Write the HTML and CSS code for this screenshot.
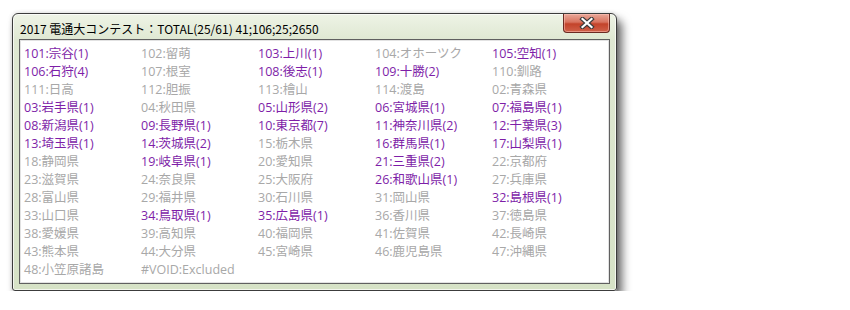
FILE: index.html
```html
<!DOCTYPE html>
<html lang="ja">
<head>
  <meta charset="UTF-8" />
  <title>2017 電通大コンテスト</title>
  <link rel="stylesheet" href="styles.css">
</head>
<body>

  <div class="window">
    <div class="titlebar">
      <span class="title">2017 電通大コンテスト：TOTAL(25/61) 41;106;25;2650</span>
      <div class="close-btn">
        <svg width="16" height="12" viewBox="0 0 16 12">
          <path d="M3.5 2 L12.5 10 M12.5 2 L3.5 10" stroke="#3b3b3b" stroke-width="4.4" stroke-linecap="square"/>
          <path d="M3.5 2 L12.5 10 M12.5 2 L3.5 10" stroke="#ffffff" stroke-width="2.2" stroke-linecap="square"/>
        </svg>
      </div>
    </div>

    <div class="panel">
      <div class="grid">
        <span class="on">101:宗谷(1)</span>
        <span>102:留萌</span>
        <span class="on">103:上川(1)</span>
        <span>104:オホーツク</span>
        <span class="on">105:空知(1)</span>

        <span class="on">106:石狩(4)</span>
        <span>107:根室</span>
        <span class="on">108:後志(1)</span>
        <span class="on">109:十勝(2)</span>
        <span>110:釧路</span>

        <span>111:日高</span>
        <span>112:胆振</span>
        <span>113:檜山</span>
        <span>114:渡島</span>
        <span>02:青森県</span>

        <span class="on">03:岩手県(1)</span>
        <span>04:秋田県</span>
        <span class="on">05:山形県(2)</span>
        <span class="on">06:宮城県(1)</span>
        <span class="on">07:福島県(1)</span>

        <span class="on">08:新潟県(1)</span>
        <span class="on">09:長野県(1)</span>
        <span class="on">10:東京都(7)</span>
        <span class="on">11:神奈川県(2)</span>
        <span class="on">12:千葉県(3)</span>

        <span class="on">13:埼玉県(1)</span>
        <span class="on">14:茨城県(2)</span>
        <span>15:栃木県</span>
        <span class="on">16:群馬県(1)</span>
        <span class="on">17:山梨県(1)</span>

        <span>18:静岡県</span>
        <span class="on">19:岐阜県(1)</span>
        <span>20:愛知県</span>
        <span class="on">21:三重県(2)</span>
        <span>22:京都府</span>

        <span>23:滋賀県</span>
        <span>24:奈良県</span>
        <span>25:大阪府</span>
        <span class="on">26:和歌山県(1)</span>
        <span>27:兵庫県</span>

        <span>28:富山県</span>
        <span>29:福井県</span>
        <span>30:石川県</span>
        <span>31:岡山県</span>
        <span class="on">32:島根県(1)</span>

        <span>33:山口県</span>
        <span class="on">34:鳥取県(1)</span>
        <span class="on">35:広島県(1)</span>
        <span>36:香川県</span>
        <span>37:徳島県</span>

        <span>38:愛媛県</span>
        <span>39:高知県</span>
        <span>40:福岡県</span>
        <span>41:佐賀県</span>
        <span>42:長崎県</span>

        <span>43:熊本県</span>
        <span>44:大分県</span>
        <span>45:宮崎県</span>
        <span>46:鹿児島県</span>
        <span>47:沖縄県</span>

        <span>48:小笠原諸島</span>
        <span>#VOID:Excluded</span>
      </div>
    </div>
  </div>

</body>
</html>
```

FILE: styles.css
```css
body {
  margin: 0;
  padding: 13px 0 0 12px;
  background: #fff;
  font-family: "Open Sans", "Noto Sans CJK JP", sans-serif;
}

.window {
  width: 605px;
  height: 278px;
  border: 1px solid #3c3c3c;
  border-radius: 6px 6px 3px 3px;
  background: linear-gradient(to bottom, #eef3e6 0px, #dfe8d2 26px, #d6e2c6 100%);
  box-shadow: 5px 7px 10px rgba(0, 0, 0, 0.6), 0 0 4px rgba(0, 0, 0, 0.15), inset 0 0 0 1px rgba(255, 255, 255, 0.7);
  display: flex;
  flex-direction: column;
  padding: 0 6px 6px 6px;
  box-sizing: border-box;
}

.titlebar {
  height: 25px;
  display: flex;
  align-items: center;
  justify-content: space-between;
}

.title {
  font-size: 12px;
  color: #000;
  padding-left: 1px;
  padding-top: 3px;
  font-family: "Noto Sans CJK JP", sans-serif;
}

.close-btn {
  width: 45px;
  height: 18px;
  margin-top: -6px;
  border: 1px solid #6b2a22;
  border-top: none;
  border-radius: 0 0 4px 4px;
  background: linear-gradient(to bottom, #e9a899 0%, #d8735f 45%, #c3432a 55%, #d0614a 100%);
  box-shadow: inset 0 0 0 1px rgba(255, 200, 190, 0.5);
  display: flex;
  align-items: center;
  justify-content: center;
}

.panel {
  flex: 1;
  background: #fff;
  border: 1px solid #606060;
  box-shadow: inset 0 0 0 1px #e2e2e2;
  padding: 5px 4px 0 4px;
}

.grid {
  display: grid;
  grid-template-columns: repeat(5, 117px);
  grid-auto-rows: 18px;
  font-size: 12.5px;
  line-height: 18px;
  color: #a8a8a8;
}

.grid span {
  white-space: nowrap;
}

.grid .on {
  color: #7e1ea8;
}
```
